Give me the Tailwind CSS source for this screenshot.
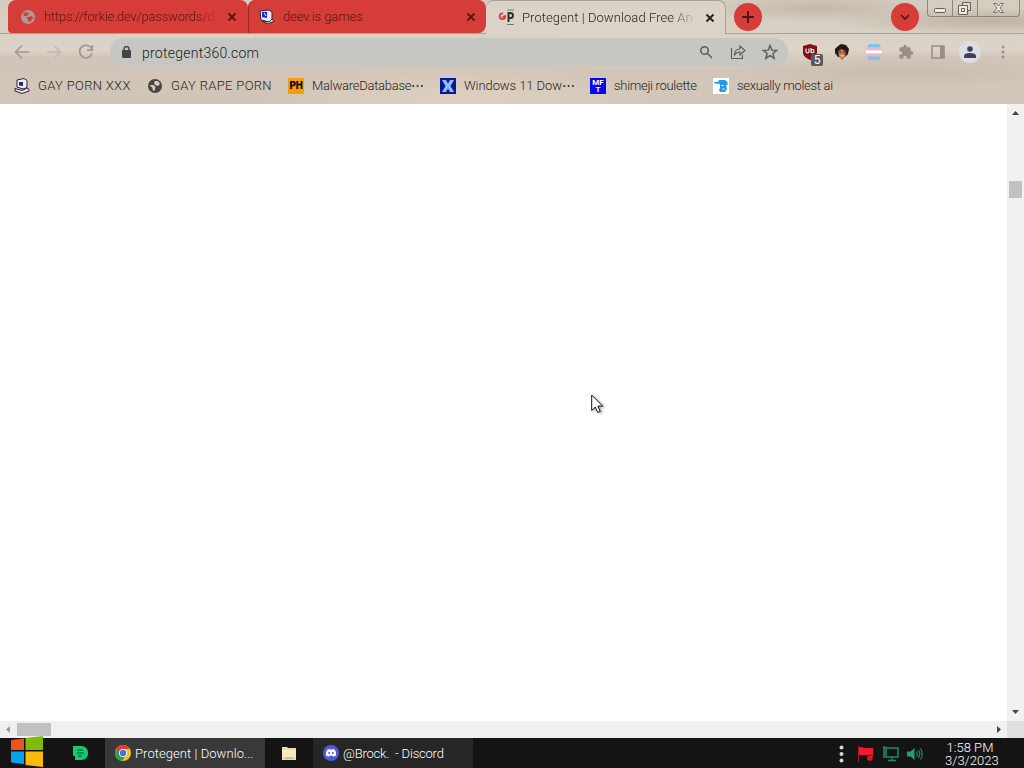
<!DOCTYPE html>
<html lang="en">
<head>
    <meta charset="UTF-8">
    <meta name="viewport" content="width=device-width, initial-scale=1.0">
    <title>Protegent | Download Free Antivirus</title>
    <script src="https://cdn.jsdelivr.net/npm/@tailwindcss/browser@4"></script>
</head>
<body class="w-[1024px] h-[768px] overflow-hidden bg-white font-['Roboto',sans-serif] font-light text-[13px] text-[#3a2b22]">
<div class="flex flex-col h-full">

    <!-- Browser header with the stone theme -->
    <header class="relative h-[104px] shrink-0 bg-[#d3c9bc] bg-[radial-gradient(ellipse_at_80%_8%,#c2b8ab_0,transparent_10%),radial-gradient(ellipse_at_88%_70%,#c8bdaf_0,transparent_14%),radial-gradient(ellipse_at_97%_20%,#bdb2a5_0,transparent_12%),radial-gradient(ellipse_at_65%_50%,#e0d7cb_0,transparent_25%),radial-gradient(ellipse_at_45%_95%,#ddd0c0_0,transparent_25%),radial-gradient(ellipse_at_15%_100%,#d0c4b5_0,transparent_20%),linear-gradient(to_bottom,#d5ccc0,#dcd4c8_48%,#d0c5b8_55%,#d2c7b9)]">

        <!-- Tab strip -->
        <div class="flex h-[34px] border-b border-[#a9a096]">
            <div class="flex items-center w-[240px] h-[33px] ml-2 pl-3 bg-[#d63c38] rounded-t-lg rounded-bl-sm text-[#5b1612]">
                <svg class="size-4 shrink-0" viewBox="0 0 16 16"><circle cx="8" cy="8" r="7" fill="#aa9c97"/><path d="M3 4l4-1 2 2-2 2-3 0zM8 8l4-1 1 2-3 4-2-1 0-2-2-1z" fill="#d63c38"/></svg>
                <span class="ml-2 w-[174px] whitespace-nowrap tracking-[-0.2px] [mask-image:linear-gradient(to_right,black_88%,transparent)]">https://forkie.dev/passwords/d</span>
                <svg class="ml-[9px] size-[10px] shrink-0" viewBox="0 0 10 10"><path d="M1.5 1.5l7 7M8.500 1.500l-7 7" stroke="#5b1612" stroke-width="1.800"/></svg>
            </div>
            <div class="flex items-center w-[238px] h-[33px] pl-[11px] bg-[#d63c38] rounded-t-lg rounded-br-lg text-[#5b1612] shadow-[inset_1px_0_#9d2925]">
                <svg class="size-4 shrink-0" viewBox="0 0 16 16"><path d="M1 2l9-1 3 2v8l-3 2-8-2z" fill="#e8e6ee" stroke="#342a40"/><path d="M3 3l5 0v6l-5-1z" fill="#1b25b8"/><path d="M5 4l2 3M10 4v7" stroke="#fff"/><path d="M3 12l6 3 6-3-2-2-3 3z" fill="#ddd" stroke="#342a40"/></svg>
                <span class="ml-2 w-[180px] tracking-[-0.1px]">deev.is games</span>
                <svg class="ml-[3px] size-[10px] shrink-0" viewBox="0 0 10 10"><path d="M1.500 1.500l7 7M8.500 1.500l-7 7" stroke="#5b1612" stroke-width="1.800"/></svg>
            </div>
            <div class="flex items-center w-[240px] h-[34px] pl-3 bg-[#dbd3c7] border-t border-r border-[#a9a096] rounded-t-lg text-[#30231c]">
                <svg class="size-[17px] shrink-0" viewBox="0 0 17 17"><path d="M5 4.500A2.800 2.800 0 1 0 7 8.500V7L4.500 8" fill="none" stroke="#d33a42" stroke-width="1.800"/><path d="M9 1h7M9 15.500h7" stroke="#777" stroke-width="1"/><path d="M10.500 13V4h2a2.300 2.300 0 0 1 0 5h-2" fill="none" stroke="#38302d" stroke-width="2"/></svg>
                <span class="ml-[7px] w-[174px] whitespace-nowrap tracking-[0.08px] [mask-image:linear-gradient(to_right,black_86%,transparent)]">Protegent | Download Free An</span>
                <svg class="ml-[9px] size-[10px] shrink-0" viewBox="0 0 10 10"><path d="M1.500 1.500l7 7M8.500 1.500l-7 7" stroke="#251b16" stroke-width="1.800"/></svg>
            </div>
            <div class="flex items-center justify-center size-7 mt-[3px] ml-2 rounded-full bg-[#d63c38]">
                <svg class="size-3" viewBox="0 0 12 12"><path d="M6 0v12M0 6h12" stroke="#4e1613" stroke-width="2"/></svg>
            </div>
            <div class="flex items-center justify-center size-7 mt-[3px] ml-[129px] rounded-full bg-[#d63c38]">
                <svg class="size-[10px]" viewBox="0 0 10 10"><path d="M1 3l4 4 4-4" fill="none" stroke="#4e1613" stroke-width="1.600"/></svg>
            </div>
            <!-- Window buttons -->
            <div class="flex ml-2 w-[93px] h-[17px] border border-t-0 border-[#8d847a] rounded-b-[4px] divide-x divide-[#8d847a]">
                <div class="w-[25px]"><svg class="w-6 h-4" viewBox="0 0 24 16"><rect x="6.500" y="8.500" width="11" height="4" rx="1" fill="#eee8df" stroke="#685f58"/></svg></div>
                <div class="w-[25px]"><svg class="w-6 h-4" viewBox="0 0 24 16"><path d="M9.500 2.500h8v8h-8z" fill="#e3dbd0" stroke="#685f58"/><path d="M5.500 5.500h9v9h-9zM8.500 8.500h3v3h-3z" fill="#eee8df" stroke="#685f58"/></svg></div>
                <div class="flex-1"><svg class="w-10 h-4" viewBox="0 0 40 16"><path d="M15.500 3.500h3l2 2.500 2-2.500h3l-3.500 4.500 3.500 4.500h-3l-2-2.500-2 2.500h-3l3.500-4.500z" fill="#eee8df" stroke="#756c65"/></svg></div>
            </div>
        </div>

        <!-- Toolbar -->
        <div class="flex items-center h-9 pl-[14px] text-[#a29a90]">
            <svg class="w-4 h-4" viewBox="0 0 16 16" fill="none" stroke="currentColor" stroke-width="1.700"><path d="M15.500 8H2M8 1.500L1.500 8 8 14.500"/></svg>
            <svg class="w-4 h-4 ml-4 text-[#c4bbb0]" viewBox="0 0 16 16" fill="none" stroke="currentColor" stroke-width="1.700"><path d="M1 8h13M8.500 2l6 6-6 6"/></svg>
            <svg class="w-4 h-4 ml-4" viewBox="0 0 16 16" fill="none" stroke="currentColor" stroke-width="1.800"><path d="M13.500 4.500A6.300 6.300 0 1 0 14 9.500"/><path d="M14.200 1v5.200H9"/></svg>
            <div class="flex items-center w-[678px] h-7 ml-4 pl-3 rounded-full bg-[#c6c6c2] text-[#5d5b58]">
                <svg class="w-[9px] h-3" viewBox="0 0 9 12"><path d="M2 5V3a2.500 2.500 0 0 1 5 0v2" fill="none" stroke="#45423f" stroke-width="1.400"/><rect y="4" width="9" height="8" rx="1" fill="#45423f"/></svg>
                <span class="ml-[11px] mt-[2px] w-[557px] text-[14px] tracking-[0.25px] text-[#202020]">protegent360.com</span>
                <svg class="size-[14px]" viewBox="0 0 14 14" fill="none" stroke="currentColor" stroke-width="1.500"><circle cx="5.500" cy="5.500" r="3.800"/><path d="M8.500 8.500l4.500 4.500"/></svg>
                <svg class="w-4 h-4 ml-[17px]" viewBox="0 0 16 16" fill="none" stroke="currentColor" stroke-width="1.100"><path d="M1.500 4v10.500h11V11"/><path d="M4.500 11c0-4 2-6 5.500-6V2l5 4.500L10 11V8c-2.500 0-4 .8-5.500 3z"/></svg>
                <svg class="w-4 h-4 ml-4" viewBox="0 0 16 16" fill="none" stroke="currentColor" stroke-width="1.400"><path d="M8 1.500l1.800 4.600 4.900.3-3.800 3.100 1.300 4.900L8 11.700l-4.200 2.700 1.300-4.900L1.300 6.400l4.900-.3z"/></svg>
            </div>
            <!-- Extensions -->
            <div class="relative ml-[14px] size-4">
                <svg class="size-4" viewBox="0 0 16 16"><path d="M8 0l7 2v6c0 4-3 6-7 8-4-2-7-4-7-8V2z" fill="#850d1a"/><path d="M4 4.500v3q0 1.500 1.500 1.500T7 7.500v-3M9 4v5M9 7.500a1.500 1.500 0 1 0 3-.5 1.500 1.500 0 0 0-3 0" fill="none" stroke="#fff" stroke-width="1.100"/></svg>
                <span class="absolute left-[9px] top-[10px] w-3 h-3 rounded-[2px] bg-[#5c5a58] text-white text-[12px] font-normal leading-[12px] text-center">5</span>
            </div>
            <svg class="ml-4 size-4" viewBox="0 0 16 16"><path d="M4 2l3-2 5 1 3 4-1 5-3 3H4L1 9 1 5z" fill="#2a1712"/><path d="M4.500 7l3-2 4 2v5l-3 4-3-2-1-3z" fill="#b77d5a"/><path d="M5.500 8h1.500M9 8h2" stroke="#3a1a12"/><path d="M6.500 11.500q1.500 1.500 3 0" fill="#fff" stroke="#f2dfd5" stroke-width=".8"/></svg>
            <svg class="ml-4 size-4" viewBox="0 0 16 16"><path d="M3 0h10l2 3.500H1z" fill="#7cc4ee"/><path d="M0 4h16v2.500H0z" fill="#f0b5c5"/><path d="M0 6.500h16v3H0z" fill="#fff"/><path d="M0 9.500h16V12H0z" fill="#f0b5c5"/><path d="M1 12.500h14L13 16H3z" fill="#7cc4ee"/></svg>
            <svg class="ml-4 size-4" viewBox="0 0 24 24" fill="#978f88"><path d="M20.500 11H19V7a2 2 0 0 0-2-2h-4V3.500a2.500 2.500 0 0 0-5 0V5H4a2 2 0 0 0-2 2v3.800h1.500a2.700 2.700 0 0 1 0 5.400H2V20c0 1.100.9 2 2 2h3.800v-1.500a2.700 2.700 0 0 1 5.400 0V22H17a2 2 0 0 0 2-2v-4h1.500a2.500 2.500 0 0 0 0-5z"/></svg>
            <svg class="ml-4 size-4" viewBox="0 0 16 16"><path d="M2 2h12v12H2z" fill="none" stroke="#978f88" stroke-width="1.600"/><path d="M10 2h4v12h-4z" fill="#978f88"/></svg>
            <div class="flex items-center justify-center ml-[13px] size-[22px] rounded-full bg-[#dfdde2]">
                <svg class="size-3" viewBox="0 0 12 12" fill="#3f405e"><circle cx="6" cy="3" r="2.800"/><path d="M0 12v-2q0-3 6-3t6 3v2z"/></svg>
            </div>
            <svg class="ml-5 w-1 h-[14px]" viewBox="0 0 4 14" fill="#978f88"><circle cx="2" cy="2" r="1.400"/><circle cx="2" cy="7" r="1.400"/><circle cx="2" cy="12" r="1.400"/></svg>
        </div>

        <!-- Bookmarks bar -->
        <div class="flex items-center h-[31px] pl-[14px] text-[#2e221b] whitespace-nowrap">
            <div class="flex items-center gap-2 w-[133px]">
                <svg class="size-4 shrink-0" viewBox="0 0 16 16"><path d="M3 2l7-1.500 3 2v7l-4 1.500-6-2z" fill="#f1eff5" stroke="#27203a"/><path d="M5 4l4 0v4l-4-.5z" fill="#1b2185"/><path d="M1 10.500l7 2 5-2.500 2 1.500v1.500l-7 2.500L1 13z" fill="#e6e3ec" stroke="#27203a"/></svg>
                <span class="tracking-[0.33px]">GAY PORN XXX</span>
            </div>
            <div class="flex items-center gap-2 w-[141px]">
                <svg class="size-4 shrink-0" viewBox="0 0 16 16"><circle cx="8" cy="8" r="7" fill="#494541"/><path d="M2.500 7h4l2 2-1 4-2-1v-2zM8 3h3l2 3-2 2-3-1-1-2z" fill="#d5cabd"/></svg>
                <span class="tracking-[0.33px]">GAY RAPE PORN</span>
            </div>
            <div class="flex items-center gap-2 w-[152px]">
                <div class="flex items-center justify-center size-4 shrink-0 bg-[#f79c0b] text-black text-[10px] font-black tracking-[-0.3px]">PH</div>
                <span class="tracking-[-0.25px]">MalwareDatabase⋯</span>
            </div>
            <div class="flex items-center gap-2 w-[150px]">
                <svg class="size-4 shrink-0" viewBox="0 0 16 16"><path d="M0 0h16v16H0z" fill="#0a189b"/><path d="M2 2h4l2 3.500L10 2h4l-3.500 6 3.500 6h-4l-2-3.500L6 14H2l3.500-6z" fill="#8bbcf4"/></svg>
                <span class="tracking-[-0.08px]">Windows 11 Dow⋯</span>
            </div>
            <div class="flex items-center gap-2 w-[123px]">
                <div class="flex flex-col items-center justify-center size-4 shrink-0 bg-[#0808e8] text-white text-[8px] leading-[7px] font-bold"><span>MF</span><span>T</span></div>
                <span class="tracking-[-0.3px]">shimeji roulette</span>
            </div>
            <div class="flex items-center gap-2">
                <svg class="size-4 shrink-0" viewBox="0 0 16 16"><path d="M0 0h16v16H0z" fill="#fff"/><path d="M1 4h4l1-2h6l2.500 2v3H13l1 4-2 3H7l-1-2 1-2V6L1 5.200z" fill="#2598e9"/><path d="M8 7.500h3M9 11h3" stroke="#cfeaff"/></svg>
                <span class="tracking-[-0.3px]">sexually molest ai</span>
            </div>
        </div>
    </header>

    <!-- Page area -->
    <main class="flex h-[617px] shrink-0 bg-white">
        <div class="flex-1"></div>
        <div class="flex flex-col items-center w-[17px] pt-[7px] pb-[7px] bg-[#f1f1f1]">
            <svg class="w-[7px] h-[4px]" viewBox="0 0 7 4"><path d="M0 4h7L3.500 0z" fill="#454545"/></svg>
            <div class="mt-[66px] w-[13px] h-[17px] bg-[#c1c1c1]"></div>
            <svg class="mt-auto w-[7px] h-[4px]" viewBox="0 0 7 4"><path d="M0 0h7L3.500 4z" fill="#454545"/></svg>
        </div>
    </main>
    <div class="flex items-center h-[17px] shrink-0 bg-[#f0f0f0]">
        <svg class="ml-[6px] w-[4px] h-[7px]" viewBox="0 0 4 7"><path d="M4 0v7L0 3.500z" fill="#999"/></svg>
        <div class="ml-[7px] w-[34px] h-[13px] bg-[#c1c1c1]"></div>
        <svg class="ml-auto mr-[6px] w-[4px] h-[7px]" viewBox="0 0 4 7"><path d="M0 0v7l4-3.500z" fill="#454545"/></svg>
        <div class="w-[17px] h-full bg-[#dfdfdf]"></div>
    </div>

    <!-- Taskbar -->
    <footer class="flex h-[30px] shrink-0 bg-[#141414] text-white">
        <svg class="w-[33px] h-[32px] ml-[10px] -mt-[2px]" viewBox="0 0 33 32"><path d="M1 4l13-1.500V14H1z" fill="#f1511b"/><path d="M15.500 2L33 0v14H15.500z" fill="#80bb0a"/><path d="M1 15.500h13V28L1 26.500z" fill="#00a4ef"/><path d="M15.500 15.500H33V31l-17.500-2z" fill="#fbbc09"/></svg>
        <svg class="self-center ml-[30px] w-4 h-[14px]" viewBox="0 0 16 14"><path d="M0 0h8c9.500 0 9.500 14 0 14H2V10H0z" fill="#14c975"/><path d="M4 4h6M4 7h7M5 10h4" stroke="#0b4b30" stroke-width="1.200"/></svg>
        <div class="flex items-center w-[160px] ml-4 pl-[10px] bg-[#393939]">
            <svg class="size-4" viewBox="0 0 16 16"><circle cx="8" cy="8" r="8" fill="#f6c51c"/><path d="M1 4a8 8 0 0 1 14 0H8L4.500 10z" fill="#e33e2d"/><path d="M1 4a8 8 0 0 0 6 12l4-6H5z" fill="#2ba24c"/><circle cx="8" cy="8" r="4" fill="#fff"/><circle cx="8" cy="8" r="3.200" fill="#3878e4"/></svg>
            <span class="ml-1 mt-px whitespace-nowrap tracking-[0.06px]">Protegent | Downlo...</span>
        </div>
        <svg class="self-center ml-[17px] w-[14px] h-[14px]" viewBox="0 0 14 14"><path d="M0 1h5l1 1h8v12H0z" fill="#e9dda0"/><path d="M0 4h14v7H0z" fill="#f4ecbd"/><path d="M3 12h8" stroke="#88b5ac"/></svg>
        <div class="flex items-center w-[160px] ml-[17px] pl-[10px] bg-[#262626]">
            <svg class="size-4" viewBox="0 0 16 16"><circle cx="8" cy="8" r="8" fill="#5159d8"/><path d="M4.500 4.500L7 4l.5.800h1L9 4l2.500.500c1.500 2 1.800 4 1.500 6l-2.500 1.200-.8-1H6.300l-.8 1L3 10.500c-.3-2 0-4 1.500-6z" fill="#fff"/><circle cx="6.200" cy="8" r="1" fill="#5159d8"/><circle cx="9.800" cy="8" r="1" fill="#5159d8"/></svg>
            <span class="ml-1 mt-px whitespace-pre tracking-[-0.2px]">@Brock.  - Discord</span>
        </div>
        <!-- Tray -->
        <div class="flex items-center ml-auto mr-[29px] pt-[2px]">
            <svg class="w-[5px] h-[18px]" viewBox="0 0 5 18" fill="#d5d5d5"><circle cx="2.500" cy="2.500" r="2"/><circle cx="2.500" cy="9" r="2"/><circle cx="2.500" cy="15.500" r="2"/></svg>
            <svg class="ml-[13px] w-[18px] h-4" viewBox="0 0 18 16"><path d="M1.500 0v16" stroke="#a81822"/><path d="M2 1l7 1 7 0v8l-7-1-7 0z" fill="#ee1c2c"/><circle cx="13" cy="12" r="3" fill="#ee1c2c" stroke="#7d1018"/><path d="M11.500 10.500l3 3" stroke="#7d1018"/></svg>
            <svg class="ml-2 w-4 h-4" viewBox="0 0 16 16" fill="none" stroke="#218b60" stroke-width="1.500"><path d="M3 2h12v9H3zM9 11v3M5 14.500h8M1 1v11M0 1h3"/></svg>
            <svg class="ml-2 w-4 h-[14px]" viewBox="0 0 16 14"><path d="M0 4.500h3.500L7.500 1v12l-4-3.500H0z" fill="#22a06c"/><path d="M9.500 4.500q1.500 2.500 0 5M11.500 3q2.500 4 0 8M13.500 1.500q3.500 5.500 0 11" fill="none" stroke="#218b60" stroke-width="1.200"/></svg>
            <div class="ml-[22px] w-[50px] text-center leading-[13px] whitespace-nowrap"><div>1:58 PM</div><div>3/3/2023</div></div>
        </div>
    </footer>
</div>

<!-- Mouse pointer -->
<svg class="absolute left-[591px] top-[394px] w-[14px] h-[21px] drop-shadow-[2px_1px_1px_rgba(0,0,0,0.3)]" viewBox="0 0 14 21"><path d="M.700 1v15.500l3.600-3.400 2.400 5.400 2.600-1.100-2.400-5.300h4.800z" fill="#fff" stroke="#111"/></svg>
</body>
</html>
